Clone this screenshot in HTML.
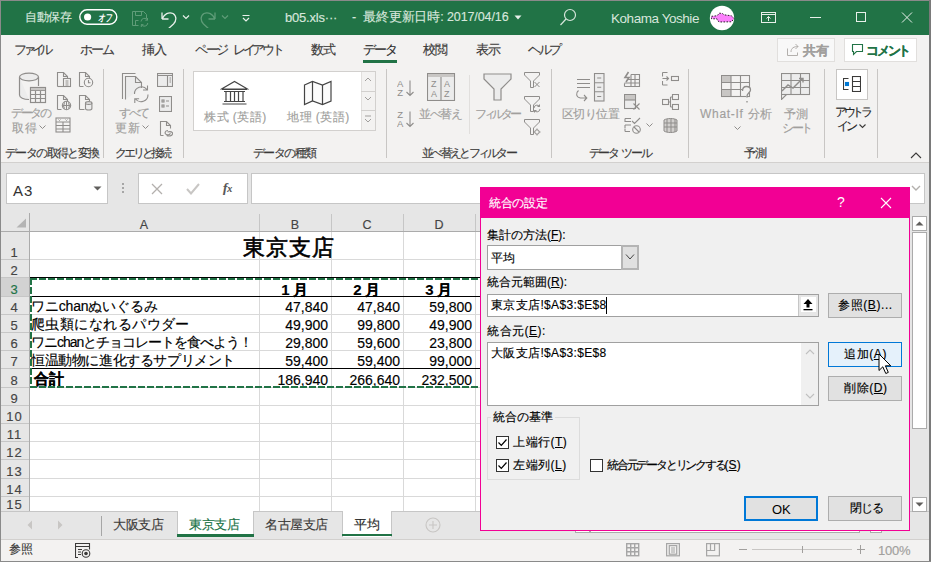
<!DOCTYPE html>
<html><head><meta charset="utf-8">
<style>
*{box-sizing:border-box;margin:0;padding:0}
html,body{width:931px;height:562px;overflow:hidden;background:#f3f2f1;font-family:"Liberation Sans",sans-serif;color:#262626;position:relative}
.a{position:absolute;white-space:nowrap}
.t{position:absolute;white-space:nowrap;line-height:1;-webkit-text-stroke:0.15px currentColor}
#title{left:0;top:0;width:931px;height:35px;background:#217346;border-top:1px solid #8a8a8a}
.tt{color:#d7e6dc;font-size:12px}
.tab{font-size:13px;color:#3b3a39;top:43px}
.dis{color:#a19f9d}
.glab{font-size:12px;color:#3b3a39;top:147px}
.sep{position:absolute;width:1px;background:#c8c6c4}
#fbar{left:1px;top:163px;width:928px;height:50px;background:#e6e6e6}
.box{position:absolute;background:#fff;border:1px solid #c6c6c6}
#grid{left:1px;top:213px;width:928px;height:298px;background:#fff;overflow:hidden}
.hl{position:absolute;left:0;height:1px;background:#dadada}
.vl{position:absolute;top:0;width:1px;background:#dadada}
.cell{position:absolute;font-size:13px;color:#000;line-height:1}
.num{text-align:right}
#dlg{left:480px;top:187px;width:430px;height:344px;background:#f0f0f0;border:1px solid #e3008c}
.dt{font-size:12px;color:#000}
.btn{position:absolute;background:#e1e1e1;border:1px solid #adadad;font-size:12px;color:#000;text-align:center}
</style></head><body>
<!-- window borders -->
<div class="a" style="left:0;top:0;width:1px;height:562px;background:#8a8a8a;z-index:50"></div>
<div class="a" style="left:929px;top:0;width:2px;height:562px;background:#7a7a7a;z-index:50"></div>
<div class="a" style="left:0;top:561px;width:931px;height:1px;background:#8a8a8a;z-index:50"></div>

<!-- TITLE BAR -->
<div class="a" id="title"></div>
<div class="t tt" style="left:25px;top:11px;letter-spacing:-0.35px">自動保存</div>
<svg class="a" style="left:79px;top:9px" width="39" height="17" viewBox="0 0 39 17">
 <rect x="0.8" y="0.8" width="37" height="14.4" rx="7.2" fill="none" stroke="#fff" stroke-width="1.4"/>
 <circle cx="8.6" cy="8" r="3.6" fill="#fff"/>
 <text x="19" y="12.3" font-size="10" font-weight="bold" font-style="italic" fill="#fff" font-family="Liberation Sans" textLength="14" lengthAdjust="spacingAndGlyphs">オフ</text>
</svg>
<svg class="a" style="left:131px;top:10px" width="19" height="18" viewBox="0 0 19 18" fill="none" stroke="#5f9c78" stroke-width="1">
 <path d="M1.5 1.5h11l3 3v4M1.5 1.5v14h6M4.5 1.5v4h6v-4M4.5 15.5v-5h3"/>
 <path d="M10 11.5a3.5 3.5 0 0 1 6.5-1.5M16.8 13a3.5 3.5 0 0 1-6.5 1.5M16.5 8v2.2h-2.2M10.3 17v-2.3h2.2"/>
</svg>
<svg class="a" style="left:160px;top:10px" width="18" height="18" viewBox="0 0 18 18" fill="none" stroke="#e8f0ea" stroke-width="1.3">
 <path d="M2 9V2.5M2 9h6.5M2 9C4 4 9 1.5 13 3.5C17 6 16.5 11 13.5 14L7.5 19.5"/>
</svg>
<svg class="a" style="left:182px;top:14px" width="8" height="6" viewBox="0 0 8 6" fill="none" stroke="#e8f0ea" stroke-width="1.2"><path d="M1 1.5l3 3 3-3"/></svg>
<svg class="a" style="left:199px;top:10px" width="18" height="18" viewBox="0 0 18 18" fill="none" stroke="#5f9c78" stroke-width="1.3">
 <path d="M16 9V2.5M16 9H9.5M16 9C14 4 9 1.5 5 3.5C1 6 1.5 11 4.5 14L10.5 19.5"/>
</svg>
<svg class="a" style="left:221px;top:14px" width="8" height="6" viewBox="0 0 8 6" fill="none" stroke="#5f9c78" stroke-width="1.2"><path d="M1 1.5l3 3 3-3"/></svg>
<svg class="a" style="left:241px;top:13px" width="10" height="9" viewBox="0 0 10 9" fill="none" stroke="#e8f0ea" stroke-width="1.2"><path d="M1.5 2.5h7M2 5l3 3 3-3"/></svg>
<div class="t tt" style="left:285px;top:11px;font-size:13px;letter-spacing:-0.2px">b05.xls···</div>
<div class="t tt" style="left:352px;top:11px;font-size:12.5px;letter-spacing:-0.1px">-&nbsp; 最終更新日時: 2017/04/16</div>
<svg class="a" style="left:514px;top:15px" width="8" height="5" viewBox="0 0 8 5"><path d="M0.5 0.5h7L4 4.5z" fill="#e8f0ea"/></svg>
<svg class="a" style="left:559px;top:8px" width="18" height="19" viewBox="0 0 18 19" fill="none" stroke="#d7e6dc" stroke-width="1.2">
 <circle cx="11" cy="7" r="5.5"/><path d="M7 11L1.5 17"/>
</svg>
<div class="t tt" style="left:611px;top:12px;font-size:13.5px;letter-spacing:-0.45px;-webkit-text-stroke:0">Kohama Yoshie</div>
<svg class="a" style="left:709px;top:5px" width="26" height="26" viewBox="0 0 26 26">
 <circle cx="13" cy="13" r="12.2" fill="#fff"/>
 <path d="M2.5 11.3L8 10.8L10.3 8.2L13.3 8.4L15 9.8L22.5 10.8L25 13.5L22.5 16.8L10.5 17L8.5 15.6L8 13.8L2.5 13.8z" fill="#fb80fb" stroke="#111" stroke-width="0.9" stroke-dasharray="1.6 1.4"/></svg>
<svg class="a" style="left:761px;top:12px" width="15" height="11" viewBox="0 0 15 11" fill="none" stroke="#e8f0ea" stroke-width="1">
 <rect x="0.5" y="0.5" width="14" height="10"/><path d="M0.5 2.5h14M7.5 9V4.5M5.5 6.5l2-2 2 2"/>
</svg>
<div class="a" style="left:810px;top:17px;width:11px;height:1px;background:#e8f0ea"></div>
<div class="a" style="left:856px;top:12px;width:10px;height:10px;border:1px solid #e8f0ea"></div>
<svg class="a" style="left:901px;top:12px" width="12" height="11" viewBox="0 0 12 11" fill="none" stroke="#e8f0ea" stroke-width="1"><path d="M1 0.5l10 10M11 0.5l-10 10"/></svg>

<!-- TABS -->
<div class="t tab" style="left:14px;letter-spacing:-4.2px">ファイル</div>
<div class="t tab" style="left:80px;letter-spacing:-1.8px">ホーム</div>
<div class="t tab" style="left:142px;letter-spacing:-1.2px">挿入</div>
<div class="t tab" style="left:195px;letter-spacing:-2.4px">ページ</div><div class="t tab" style="left:233px;letter-spacing:-3.3px">レイアウト</div>
<div class="t tab" style="left:311px;letter-spacing:-0.8px">数式</div>
<div class="t tab" style="left:363px;letter-spacing:-2.2px;color:#262626">データ</div>
<div class="a" style="left:363px;top:60px;width:34px;height:3px;background:#217346"></div>
<div class="t tab" style="left:423px;letter-spacing:-0.8px">校閲</div>
<div class="t tab" style="left:476px;letter-spacing:-0.8px">表示</div>
<div class="t tab" style="left:528px;letter-spacing:-2.4px">ヘルプ</div>
<div class="a" style="left:777px;top:38px;width:58px;height:24px;border:1px solid #e1dfdd;background:#f8f8f8"></div>
<svg class="a" style="left:786px;top:43px" width="14" height="14" viewBox="0 0 14 14" fill="none" stroke="#b3b0ad" stroke-width="1"><path d="M1.5 5.5v7h10v-3M5 9c0-4 3-5.5 7-5.5M9.5 1l2.5 2.5L9.5 6"/></svg>
<div class="t" style="left:803px;top:44px;font-size:13px;color:#a19f9d;font-weight:bold;letter-spacing:-0.5px">共有</div>
<div class="a" style="left:844px;top:38px;width:73px;height:24px;border:1px solid #e1dfdd;background:#fff"></div>
<svg class="a" style="left:851px;top:43px" width="13" height="13" viewBox="0 0 13 13" fill="none" stroke="#217346" stroke-width="1.1"><path d="M1.5 1.5h10v7h-6l-3 3v-3h-1z"/></svg>
<div class="t" style="left:866px;top:44px;font-size:13px;color:#217346;font-weight:bold;letter-spacing:-2.2px">コメント</div>

<!-- RIBBON -->
<!-- group 1 -->
<svg class="a" style="left:18px;top:72px" width="29" height="32" viewBox="0 0 29 32" fill="none" stroke="#8f8d8b" stroke-width="1.2">
 <path d="M1.5 5v18c0 2.5 4 4.5 9.5 4.5" fill="#ececec"/><ellipse cx="11" cy="5" rx="9.5" ry="3.8" fill="#ececec"/><path d="M20.5 5v9"/>
 <rect x="12.5" y="15.5" width="15" height="15" fill="#f3f2f1"/><path d="M12.5 18.5h15M12.5 22.5h15M12.5 26.5h15M17.5 18.5v12M22.5 18.5v12"/>
 <rect x="13" y="16" width="14" height="2.2" fill="#c8c6c4" stroke="none"/>
</svg>
<div class="t dis" style="left:11px;top:107px;font-size:12px;letter-spacing:-2.5px">データの</div>
<div class="t dis" style="left:12px;top:122px;font-size:12px;letter-spacing:0.6px">取得</div>
<svg class="a" style="left:39px;top:125px" width="7" height="5" viewBox="0 0 7 5" fill="none" stroke="#8f8d8b" stroke-width="1"><path d="M0.5 0.5l3 3 3-3"/></svg>
<svg class="a" style="left:56px;top:71px" width="16" height="17" viewBox="0 0 16 17" fill="none" stroke="#8f8d8b" stroke-width="1.1">
 <path d="M1.5 15.5V1.5h6l4 4v2"/><path d="M7.5 1.5v4h4"/><rect x="7.5" y="7.5" width="7" height="8" fill="#f3f2f1"/><path d="M9.5 10h3M9.5 12h3M9.5 14h3"/><path d="M1.5 15.5h6"/>
</svg>
<svg class="a" style="left:78px;top:71px" width="16" height="17" viewBox="0 0 16 17" fill="none" stroke="#8f8d8b" stroke-width="1.1">
 <path d="M1.5 15.5V1.5h6l4 4v2M7.5 1.5v4h4M1.5 15.5h4"/><circle cx="10.5" cy="11.5" r="4.2" fill="#f3f2f1"/><path d="M10.5 9v2.8h2"/>
</svg>
<svg class="a" style="left:56px;top:94px" width="16" height="17" viewBox="0 0 16 17" fill="none" stroke="#8f8d8b" stroke-width="1.1">
 <path d="M1.5 15.5V1.5h6l4 4v2M7.5 1.5v4h4M1.5 15.5h4"/><circle cx="10.5" cy="11.5" r="4.2" fill="#f3f2f1"/><path d="M6.3 11.5h8.4M10.5 7.3v8.4M8.5 8.2c-1 2-1 4.6 0 6.6M12.5 8.2c1 2 1 4.6 0 6.6"/>
</svg>
<svg class="a" style="left:78px;top:94px" width="16" height="17" viewBox="0 0 16 17" fill="none" stroke="#8f8d8b" stroke-width="1.1">
 <path d="M1.5 15.5V1.5h6l4 4v2M7.5 1.5v4h4M1.5 15.5h5"/><path d="M7.5 9v5.5c0 0.8 1.5 1.5 3.2 1.5s3.2-0.7 3.2-1.5V9" fill="#ececec"/><ellipse cx="10.7" cy="9" rx="3.2" ry="1.4" fill="#ececec"/>
</svg>
<svg class="a" style="left:55px;top:117px" width="16" height="16" viewBox="0 0 16 16" fill="none" stroke="#8f8d8b" stroke-width="1.1">
 <rect x="1" y="1" width="14" height="14"/><path d="M1 5h14M1 8.5h14M1 12h14M8 5v10"/><path d="M3.5 2.5l1 1 1-1M10.5 2.5l1 1 1-1" stroke-width="0.9"/>
</svg>
<div class="t" style="left:5px;top:147px;font-size:12px;color:#3b3a39;letter-spacing:-1.6px">データの取得と変換</div>
<div class="sep" style="left:103px;top:69px;height:89px"></div>
<!-- group 2 -->
<svg class="a" style="left:121px;top:72px" width="29" height="32" viewBox="0 0 29 32" fill="none" stroke="#8f8d8b" stroke-width="1.1">
 <path d="M1.5 27V1.5h13"/><path d="M4.5 27.5V4.5h10l6 6V16" fill="#ececec"/><path d="M14.5 4.5v6h6"/>
 <path d="M13.5 22a7 7 0 0 1 12.5-4.5M27 22.5a7 7 0 0 1-12.5 4.5M26.5 13.5v4.5h-4.5M13.8 31v-4.3h4.3"/>
</svg>
<div class="t dis" style="left:119px;top:107px;font-size:12px;letter-spacing:-2.3px">すべて</div>
<div class="t dis" style="left:115px;top:122px;font-size:12px;letter-spacing:0.6px">更新</div>
<svg class="a" style="left:142px;top:125px" width="7" height="5" viewBox="0 0 7 5" fill="none" stroke="#8f8d8b" stroke-width="1"><path d="M0.5 0.5l3 3 3-3"/></svg>
<svg class="a" style="left:157px;top:73px" width="16" height="14" viewBox="0 0 16 14" fill="none" stroke="#8f8d8b" stroke-width="1.1">
 <rect x="0.5" y="0.5" width="15" height="13" fill="#ececec"/><path d="M0.5 2.5h15M10.5 2.5v11M12.5 5h1.5M12.5 7h1.5M12.5 9h1.5"/>
</svg>
<svg class="a" style="left:159px;top:96px" width="13" height="16" viewBox="0 0 13 16" fill="none" stroke="#8f8d8b" stroke-width="1.1">
 <rect x="0.5" y="0.5" width="12" height="15" fill="#ececec"/><rect x="3" y="4" width="2" height="2"/><rect x="3" y="9" width="2" height="2"/><path d="M7 5h3M7 10h3"/>
</svg>
<svg class="a" style="left:159px;top:120px" width="15" height="17" viewBox="0 0 15 17" fill="none" stroke="#8f8d8b" stroke-width="1.1">
 <path d="M1.5 15.5V1.5h6l4 4v3M7.5 1.5v4h4M1.5 15.5h3"/><path d="M9 10.5c-3 0-4 3.2-1.5 4s4 0 3.5-1.5M8.5 12c3-1 5.5 0 5 2s-3.5 2.5-6 1.5"/>
</svg>
<div class="t" style="left:115px;top:147px;font-size:12px;color:#3b3a39;letter-spacing:-3.1px">クエリと接続</div>
<div class="sep" style="left:183px;top:69px;height:89px"></div>
<!-- group 3 gallery -->
<div class="a" style="left:193px;top:71px;width:183px;height:60px;background:#fff;border:1px solid #d2d0ce"></div>
<div class="a" style="left:361px;top:72px;width:14px;height:58px;background:#f3f2f1;border-left:1px solid #e1dfdd"></div>
<div class="a" style="left:361px;top:91px;width:14px;height:1px;background:#d2d0ce"></div>
<div class="a" style="left:361px;top:110px;width:14px;height:1px;background:#d2d0ce"></div>
<svg class="a" style="left:364px;top:77px" width="8" height="50" viewBox="0 0 8 50" fill="none" stroke="#a19f9d" stroke-width="1">
 <path d="M1 4l3-3 3 3M1 20l3 3 3-3M1 39h6M1 42l3 3 3-3"/>
</svg>
<svg class="a" style="left:220px;top:80px" width="29" height="26" viewBox="0 0 29 26" fill="none" stroke="#444" stroke-width="1.2">
 <path d="M1.5 9L14.5 1.5L27.5 9z" fill="#fff"/><path d="M2 9.5h25M4 11.5h21M4 21.5h21M2.5 24h24"/><path d="M6 11.5v10M10.5 11.5v10M14.5 11.5v10M18.5 11.5v10M23 11.5v10"/>
</svg>
<svg class="a" style="left:303px;top:80px" width="30" height="26" viewBox="0 0 30 26" fill="none" stroke="#444" stroke-width="1.2">
 <path d="M1.5 5L9.5 1.5L19.5 5L28 1.5V21L19.5 24.5L9.5 21L1.5 24.5z" fill="#fbfbfb"/><path d="M9.5 1.5V21M19.5 5V24.5"/>
</svg>
<div class="t dis" style="left:204px;top:111px;font-size:12px;letter-spacing:0.5px">株式 (英語)</div>
<div class="t dis" style="left:287px;top:111px;font-size:12px;letter-spacing:0.5px">地理 (英語)</div>
<div class="t" style="left:253px;top:147px;font-size:12px;color:#3b3a39;letter-spacing:-1.6px">データの種類</div>
<div class="sep" style="left:386px;top:69px;height:89px"></div>
<!-- group 4 sort filter -->
<svg class="a" style="left:397px;top:79px" width="18" height="18" viewBox="0 0 18 18" fill="none" stroke="#8f8d8b" stroke-width="1.1">
 <text x="0" y="8" font-size="9.5" fill="#8f8d8b" stroke="none" font-family="Liberation Sans">A</text><text x="0.3" y="17" font-size="9.5" fill="#8f8d8b" stroke="none" font-family="Liberation Sans">Z</text>
 <path d="M13 1.5v15M9.5 13l3.5 3.5 3.5-3.5"/>
</svg>
<svg class="a" style="left:397px;top:110px" width="18" height="18" viewBox="0 0 18 18" fill="none" stroke="#8f8d8b" stroke-width="1.1">
 <text x="0.3" y="8" font-size="9.5" fill="#8f8d8b" stroke="none" font-family="Liberation Sans">Z</text><text x="0" y="17" font-size="9.5" fill="#8f8d8b" stroke="none" font-family="Liberation Sans">A</text>
 <path d="M13 1.5v15M9.5 13l3.5 3.5 3.5-3.5"/>
</svg>
<svg class="a" style="left:427px;top:73px" width="29" height="28" viewBox="0 0 29 28" fill="none" stroke="#8f8d8b" stroke-width="1.1">
 <rect x="0.5" y="0.5" width="27" height="27" fill="#ececec"/><rect x="1" y="1" width="26" height="3" fill="#c8c6c4" stroke="none"/><path d="M14 4v23.5"/>
 <text x="4" y="14" font-size="9" fill="#8f8d8b" stroke="none" font-family="Liberation Sans">Z</text><text x="4" y="24" font-size="9" fill="#8f8d8b" stroke="none" font-family="Liberation Sans">A</text>
 <text x="17" y="14" font-size="9" fill="#8f8d8b" stroke="none" font-family="Liberation Sans">A</text><text x="17" y="24" font-size="9" fill="#8f8d8b" stroke="none" font-family="Liberation Sans">Z</text>
</svg>
<div class="t dis" style="left:419px;top:108px;font-size:12px;letter-spacing:-1.3px">並べ替え</div>
<div class="sep" style="left:469px;top:75px;height:59px;background:#e1dfdd"></div>
<svg class="a" style="left:483px;top:73px" width="29" height="28" viewBox="0 0 29 28" fill="none" stroke="#8f8d8b" stroke-width="1.2">
 <path d="M1 1h27v5L18 16v11h-7V16L1 6z" fill="#ececec"/>
</svg>
<div class="t dis" style="left:475px;top:108px;font-size:12px;letter-spacing:-3.3px">フィルター</div>
<svg class="a" style="left:524px;top:72px" width="18" height="17" viewBox="0 0 18 17" fill="none" stroke="#8f8d8b" stroke-width="1">
 <path d="M0.5 0.5h15v2.5L9.5 9v6.5h-3V9L0.5 3z"/><path d="M10.5 10l5 5M15.5 10l-5 5"/>
</svg>
<svg class="a" style="left:524px;top:96px" width="18" height="17" viewBox="0 0 18 17" fill="none" stroke="#8f8d8b" stroke-width="1">
 <path d="M0.5 0.5h15v2.5L9.5 9v6.5h-3V9L0.5 3z"/><path d="M10 12a3 3 0 0 1 5.5-1.5M16 13a3 3 0 0 1-5.5 1.5M15.5 8.5v2h-2M10.5 16.5v-2h2"/>
</svg>
<svg class="a" style="left:524px;top:119px" width="18" height="17" viewBox="0 0 18 17" fill="none" stroke="#8f8d8b" stroke-width="1">
 <path d="M0.5 0.5h15v2.5L9.5 9v6.5h-3V9L0.5 3z"/><circle cx="13" cy="13" r="2.2"/><path d="M13 9.5v1.3M13 15.2v1.3M9.5 13h1.3M15.2 13h1.3"/>
</svg>
<div class="t" style="left:422px;top:147px;font-size:12px;color:#3b3a39;letter-spacing:-2.7px">並べ替えとフィルター</div>
<div class="sep" style="left:551px;top:69px;height:89px"></div>
<!-- group 5 data tools -->
<svg class="a" style="left:573px;top:73px" width="32" height="29" viewBox="0 0 32 29" fill="none" stroke="#8f8d8b" stroke-width="1.1">
 <path d="M4 6.5h13M4 10.5h13M4 14.5h13"/><path d="M5.5 17.5c-3 2.5-2.5 7 2 7.5h6M11 22l2.8 3-2.8 3"/>
 <rect x="21.5" y="0.5" width="9.5" height="27.5" fill="#ececec" /><path d="M21.5 9.7h9.5M21.5 18.8h9.5M24.2 5h4M24.2 14.2h4M24.2 23.5h4"/>
</svg>
<div class="t dis" style="left:562px;top:108px;font-size:12px;letter-spacing:-0.6px">区切り位置</div>
<svg class="a" style="left:623px;top:71px" width="18" height="16" viewBox="0 0 18 16" fill="none" stroke="#8f8d8b" stroke-width="1.1">
 <path d="M5.5 1L2 6.5h4L3 11" stroke-width="1.6"/><path d="M1.5 15.5h15V3.5H8M1.5 12.5v3M8 3.5v12M12 3.5v12M4 8.5h12.5M1.5 12h15"/>
</svg>
<svg class="a" style="left:624px;top:94px" width="17" height="16" viewBox="0 0 17 16" fill="none" stroke="#8f8d8b" stroke-width="1.1">
 <rect x="0.5" y="0.5" width="11" height="14" fill="#ececec"/><rect x="1" y="1" width="10" height="5" fill="#c8c6c4" stroke="none"/><path d="M0.5 6h11"/><path d="M9.5 9.5l6 6M15.5 9.5l-6 6"/>
</svg>
<svg class="a" style="left:624px;top:117px" width="18" height="17" viewBox="0 0 18 17" fill="none" stroke="#8f8d8b" stroke-width="1.1">
 <path d="M1 1.5h6M1 1.5v3h6M1 8h6M1 8v3M1 14.5h5M1 11.5v3M8 4l2.5 2.5L16 1"/><circle cx="12.5" cy="12.5" r="3.8"/><path d="M10 10l5 5"/>
</svg>
<svg class="a" style="left:646px;top:123px" width="7" height="5" viewBox="0 0 7 5" fill="none" stroke="#8f8d8b" stroke-width="1"><path d="M0.5 0.5l3 3 3-3"/></svg>
<svg class="a" style="left:662px;top:72px" width="17" height="14" viewBox="0 0 17 14" fill="none" stroke="#8f8d8b" stroke-width="1.1">
 <path d="M0.5 0.5h5M0.5 0.5v4M0.5 13h5M0.5 9v4M0.5 6.5h6M4.5 4.5l2 2-2 2"/><rect x="9.5" y="4.5" width="7" height="4"/>
</svg>
<svg class="a" style="left:662px;top:94px" width="17" height="16" viewBox="0 0 17 16" fill="none" stroke="#8f8d8b" stroke-width="1.1">
 <rect x="0.5" y="5.5" width="6" height="5"/><rect x="10.5" y="0.5" width="6" height="5"/><rect x="10.5" y="10.5" width="6" height="5"/><path d="M6.5 8h2M8.5 3v10M8.5 3h2M8.5 13h2"/>
</svg>
<svg class="a" style="left:662px;top:117px" width="17" height="16" viewBox="0 0 17 16" fill="#d2d0ce" stroke="#8f8d8b" stroke-width="1">
 <path d="M2 3c3-2 10-2 13 0v11c-3 2-10 2-13 0z"/><path d="M5 2v13M9 1.5v14M13 2v13M2 6h13M2 10h13" fill="none"/>
</svg>
<div class="t" style="left:589px;top:147px;font-size:12px;color:#3b3a39;letter-spacing:-2.6px">データ</div><div class="t" style="left:621px;top:147px;font-size:12px;color:#3b3a39;letter-spacing:-2.2px">ツール</div>
<div class="sep" style="left:688px;top:69px;height:89px"></div>
<!-- group 6 forecast -->
<svg class="a" style="left:721px;top:75px" width="32" height="29" viewBox="0 0 32 29" fill="none" stroke="#8f8d8b" stroke-width="1.1">
 <rect x="0.5" y="0.5" width="28" height="21" fill="#f3f2f1"/><rect x="1" y="1" width="9" height="6.5" fill="#c8c6c4" stroke="none"/><rect x="1" y="14.5" width="9" height="6.5" fill="#c8c6c4" stroke="none"/>
 <path d="M0.5 7.5h28M0.5 14.5h28M10 0.5v21M19.5 0.5v21"/>
 <path d="M21.5 16c0-3 1.5-4.5 4-4.5s4 1.5 4 3.5c0 2.5-3.5 3-3.5 6v1.5M26 26v1.5" stroke-width="1.3" fill="#f3f2f1"/>
</svg>
<div class="t dis" style="left:700px;top:108px;font-size:12px;letter-spacing:0.7px">What-If 分析</div>
<svg class="a" style="left:734px;top:126px" width="7" height="5" viewBox="0 0 7 5" fill="none" stroke="#8f8d8b" stroke-width="1"><path d="M0.5 0.5l3 3 3-3"/></svg>
<svg class="a" style="left:781px;top:73px" width="30" height="27" viewBox="0 0 30 27" fill="none" stroke="#8f8d8b" stroke-width="1.1">
 <rect x="0.5" y="0.5" width="28" height="21" fill="#ececec"/><path d="M0.5 7.5h28M0.5 14.5h28M10 0.5v21M19.5 0.5v21"/><path d="M0.5 21.5v5l5-5"/>
 <path d="M1 18l6-6 5 3 9-9M18 5.5h4v4" stroke-width="1.4"/>
</svg>
<div class="t dis" style="left:784px;top:108px;font-size:12px;letter-spacing:-0.4px">予測</div>
<div class="t dis" style="left:782px;top:122px;font-size:12px;letter-spacing:-2.5px">シート</div>
<div class="t" style="left:744px;top:147px;font-size:12px;color:#3b3a39;letter-spacing:-0.6px">予測</div>
<div class="sep" style="left:824px;top:69px;height:89px"></div>
<!-- group 7 outline -->
<div class="a" style="left:836px;top:69px;width:32px;height:31px;background:#fff;border:1px solid #c8c6c4"></div>
<svg class="a" style="left:843px;top:76px" width="18" height="16" viewBox="0 0 18 16" fill="none" stroke="#3b3a39" stroke-width="1.1">
 <path d="M5.5 2.5h-5v11h5"/><rect x="9.5" y="0.5" width="8" height="15"/><path d="M9.5 5.5h8M9.5 10.5h8"/><rect x="2.5" y="6.5" width="3" height="3" fill="#0078d4" stroke="#0078d4"/>
</svg>
<div class="t" style="left:835px;top:106px;font-size:12px;color:#262626;letter-spacing:-3.4px">アウトラ</div>
<div class="t" style="left:837px;top:120px;font-size:12px;color:#262626;letter-spacing:-2.6px">イン</div>
<svg class="a" style="left:859px;top:124px" width="7" height="5" viewBox="0 0 7 5" fill="none" stroke="#3b3a39" stroke-width="1.1"><path d="M0.5 0.5l3 3 3-3"/></svg>
<div class="sep" style="left:877px;top:69px;height:89px"></div>
<svg class="a" style="left:910px;top:152px" width="12" height="7" viewBox="0 0 12 7" fill="none" stroke="#3b3a39" stroke-width="1.1"><path d="M1 6l5-5 5 5"/></svg>
<div class="a" style="left:1px;top:162px;width:928px;height:1px;background:#d2d0ce"></div>

<!-- FORMULA BAR -->
<div class="a" id="fbar"></div>
<div class="box" style="left:6px;top:173px;width:102px;height:31px;border-color:#c6c6c6"></div>
<div class="t" style="left:13px;top:183px;font-size:15px;color:#333;letter-spacing:1px;-webkit-text-stroke:0">A3</div>
<svg class="a" style="left:93px;top:186px" width="9" height="5" viewBox="0 0 9 5"><path d="M0.5 0.5h8L4.5 4.5z" fill="#605e5c"/></svg>
<div class="a" style="left:122px;top:183px;width:2px;height:2px;background:#a6a6a6"></div>
<div class="a" style="left:122px;top:187px;width:2px;height:2px;background:#a6a6a6"></div>
<div class="a" style="left:122px;top:191px;width:2px;height:2px;background:#a6a6a6"></div>
<div class="box" style="left:138px;top:173px;width:110px;height:31px;border-color:#c6c6c6"></div>
<svg class="a" style="left:151px;top:183px" width="12" height="12" viewBox="0 0 12 12" fill="none" stroke="#b3b0ad" stroke-width="1.3"><path d="M1 1l10 10M11 1L1 11"/></svg>
<svg class="a" style="left:186px;top:183px" width="14" height="12" viewBox="0 0 14 12" fill="none" stroke="#c8c6c4" stroke-width="2"><path d="M1 6l4 4.5L13 1"/></svg>
<div class="t" style="left:223px;top:181px;font-size:13px;color:#555;font-family:'Liberation Serif',serif;font-style:italic;font-weight:bold">f<span style="font-size:10px">x</span></div>
<div class="box" style="left:251px;top:173px;width:674px;height:31px;border-color:#c6c6c6"></div>
<svg class="a" style="left:911px;top:185px" width="10" height="6" viewBox="0 0 10 6" fill="none" stroke="#b3b0ad" stroke-width="1.4"><path d="M1 1l4 4 4-4"/></svg>

<!-- GRID -->
<div class="a" style="left:1px;top:213px;width:928px;height:298px;background:#fff"></div>
<div class="a" style="left:1px;top:213px;width:928px;height:18px;background:#e6e6e6"></div>
<div class="a" style="left:1px;top:213px;width:28px;height:298px;background:#e6e6e6"></div>
<div class="a" style="left:1px;top:278px;width:28px;height:18px;background:#d2d2d2"></div>
<div class="a" style="left:30px;top:259px;width:899px;height:1px;background:#d9d9d9"></div>
<div class="a" style="left:1px;top:259px;width:28px;height:1px;background:#c6c6c6"></div>
<div class="a" style="left:30px;top:277px;width:899px;height:1px;background:#d9d9d9"></div>
<div class="a" style="left:1px;top:277px;width:28px;height:1px;background:#c6c6c6"></div>
<div class="a" style="left:30px;top:296px;width:899px;height:1px;background:#d9d9d9"></div>
<div class="a" style="left:1px;top:296px;width:28px;height:1px;background:#c6c6c6"></div>
<div class="a" style="left:30px;top:314px;width:899px;height:1px;background:#d9d9d9"></div>
<div class="a" style="left:1px;top:314px;width:28px;height:1px;background:#c6c6c6"></div>
<div class="a" style="left:30px;top:332px;width:899px;height:1px;background:#d9d9d9"></div>
<div class="a" style="left:1px;top:332px;width:28px;height:1px;background:#c6c6c6"></div>
<div class="a" style="left:30px;top:350px;width:899px;height:1px;background:#d9d9d9"></div>
<div class="a" style="left:1px;top:350px;width:28px;height:1px;background:#c6c6c6"></div>
<div class="a" style="left:30px;top:368px;width:899px;height:1px;background:#d9d9d9"></div>
<div class="a" style="left:1px;top:368px;width:28px;height:1px;background:#c6c6c6"></div>
<div class="a" style="left:30px;top:387px;width:899px;height:1px;background:#d9d9d9"></div>
<div class="a" style="left:1px;top:387px;width:28px;height:1px;background:#c6c6c6"></div>
<div class="a" style="left:30px;top:405px;width:899px;height:1px;background:#d9d9d9"></div>
<div class="a" style="left:1px;top:405px;width:28px;height:1px;background:#c6c6c6"></div>
<div class="a" style="left:30px;top:423px;width:899px;height:1px;background:#d9d9d9"></div>
<div class="a" style="left:1px;top:423px;width:28px;height:1px;background:#c6c6c6"></div>
<div class="a" style="left:30px;top:441px;width:899px;height:1px;background:#d9d9d9"></div>
<div class="a" style="left:1px;top:441px;width:28px;height:1px;background:#c6c6c6"></div>
<div class="a" style="left:30px;top:459px;width:899px;height:1px;background:#d9d9d9"></div>
<div class="a" style="left:1px;top:459px;width:28px;height:1px;background:#c6c6c6"></div>
<div class="a" style="left:30px;top:478px;width:899px;height:1px;background:#d9d9d9"></div>
<div class="a" style="left:1px;top:478px;width:28px;height:1px;background:#c6c6c6"></div>
<div class="a" style="left:30px;top:496px;width:899px;height:1px;background:#d9d9d9"></div>
<div class="a" style="left:1px;top:496px;width:28px;height:1px;background:#c6c6c6"></div>
<div class="a" style="left:259px;top:232px;width:1px;height:279px;background:#d9d9d9"></div>
<div class="a" style="left:259px;top:214px;width:1px;height:17px;background:#c6c6c6"></div>
<div class="a" style="left:331px;top:232px;width:1px;height:279px;background:#d9d9d9"></div>
<div class="a" style="left:331px;top:214px;width:1px;height:17px;background:#c6c6c6"></div>
<div class="a" style="left:403px;top:232px;width:1px;height:279px;background:#d9d9d9"></div>
<div class="a" style="left:403px;top:214px;width:1px;height:17px;background:#c6c6c6"></div>
<div class="a" style="left:475px;top:232px;width:1px;height:279px;background:#d9d9d9"></div>
<div class="a" style="left:475px;top:214px;width:1px;height:17px;background:#c6c6c6"></div>
<div class="a" style="left:547px;top:232px;width:1px;height:279px;background:#d9d9d9"></div>
<div class="a" style="left:547px;top:214px;width:1px;height:17px;background:#c6c6c6"></div>
<div class="a" style="left:619px;top:232px;width:1px;height:279px;background:#d9d9d9"></div>
<div class="a" style="left:619px;top:214px;width:1px;height:17px;background:#c6c6c6"></div>
<div class="a" style="left:691px;top:232px;width:1px;height:279px;background:#d9d9d9"></div>
<div class="a" style="left:691px;top:214px;width:1px;height:17px;background:#c6c6c6"></div>
<div class="a" style="left:763px;top:232px;width:1px;height:279px;background:#d9d9d9"></div>
<div class="a" style="left:763px;top:214px;width:1px;height:17px;background:#c6c6c6"></div>
<div class="a" style="left:835px;top:232px;width:1px;height:279px;background:#d9d9d9"></div>
<div class="a" style="left:835px;top:214px;width:1px;height:17px;background:#c6c6c6"></div>
<div class="a" style="left:907px;top:232px;width:1px;height:279px;background:#d9d9d9"></div>
<div class="a" style="left:907px;top:214px;width:1px;height:17px;background:#c6c6c6"></div>
<div class="a" style="left:1px;top:231px;width:928px;height:1px;background:#ababab"></div>
<div class="a" style="left:29px;top:213px;width:1px;height:298px;background:#ababab"></div>
<svg class="a" style="left:16px;top:218px" width="11" height="10" viewBox="0 0 11 10"><path d="M10 0.5V9.5H0.5z" fill="#b4b4b4"/></svg>
<div class="t" style="left:124.0px;width:40px;text-align:center;top:219px;font-size:12.5px;color:#444">A</div>
<div class="t" style="left:275.0px;width:40px;text-align:center;top:219px;font-size:12.5px;color:#444">B</div>
<div class="t" style="left:347.0px;width:40px;text-align:center;top:219px;font-size:12.5px;color:#444">C</div>
<div class="t" style="left:419.0px;width:40px;text-align:center;top:219px;font-size:12.5px;color:#444">D</div>
<div class="t" style="left:491.0px;width:40px;text-align:center;top:219px;font-size:12.5px;color:#444">E</div>
<div class="t" style="left:563.0px;width:40px;text-align:center;top:219px;font-size:12.5px;color:#444">F</div>
<div class="t" style="left:635.0px;width:40px;text-align:center;top:219px;font-size:12.5px;color:#444">G</div>
<div class="t" style="left:707.0px;width:40px;text-align:center;top:219px;font-size:12.5px;color:#444">H</div>
<div class="t" style="left:779.0px;width:40px;text-align:center;top:219px;font-size:12.5px;color:#444">I</div>
<div class="t" style="left:851.0px;width:40px;text-align:center;top:219px;font-size:12.5px;color:#444">J</div>
<div class="t" style="left:0px;width:28px;text-align:center;top:246px;font-size:13px;color:#444;letter-spacing:1px;text-indent:1px">1</div>
<div class="t" style="left:0px;width:28px;text-align:center;top:264px;font-size:13px;color:#444;letter-spacing:1px;text-indent:1px">2</div>
<div class="t" style="left:0px;width:28px;text-align:center;top:283px;font-size:13px;color:#217346;letter-spacing:1px;text-indent:1px">3</div>
<div class="t" style="left:0px;width:28px;text-align:center;top:301px;font-size:13px;color:#444;letter-spacing:1px;text-indent:1px">4</div>
<div class="t" style="left:0px;width:28px;text-align:center;top:319px;font-size:13px;color:#444;letter-spacing:1px;text-indent:1px">5</div>
<div class="t" style="left:0px;width:28px;text-align:center;top:337px;font-size:13px;color:#444;letter-spacing:1px;text-indent:1px">6</div>
<div class="t" style="left:0px;width:28px;text-align:center;top:355px;font-size:13px;color:#444;letter-spacing:1px;text-indent:1px">7</div>
<div class="t" style="left:0px;width:28px;text-align:center;top:374px;font-size:13px;color:#444;letter-spacing:1px;text-indent:1px">8</div>
<div class="t" style="left:0px;width:28px;text-align:center;top:392px;font-size:13px;color:#444;letter-spacing:1px;text-indent:1px">9</div>
<div class="t" style="left:0px;width:28px;text-align:center;top:410px;font-size:13px;color:#444;letter-spacing:1px;text-indent:1px">10</div>
<div class="t" style="left:0px;width:28px;text-align:center;top:428px;font-size:13px;color:#444;letter-spacing:1px;text-indent:1px">11</div>
<div class="t" style="left:0px;width:28px;text-align:center;top:446px;font-size:13px;color:#444;letter-spacing:1px;text-indent:1px">12</div>
<div class="t" style="left:0px;width:28px;text-align:center;top:465px;font-size:13px;color:#444;letter-spacing:1px;text-indent:1px">13</div>
<div class="t" style="left:0px;width:28px;text-align:center;top:483px;font-size:13px;color:#444;letter-spacing:1px;text-indent:1px">14</div>
<div class="t" style="left:0px;width:28px;text-align:center;top:498px;font-size:13px;color:#444;letter-spacing:1px;text-indent:1px">15</div>
<div class="t" style="left:30px;width:517px;text-align:center;top:237px;font-size:22px;color:#000;letter-spacing:1px;text-indent:1px;-webkit-text-stroke:0.6px #000">東京支店</div>
<div class="t" style="left:259px;width:72px;text-align:center;top:282px;font-size:15px;color:#000;font-weight:bold;letter-spacing:3px;text-indent:2px">1月</div>
<div class="t" style="left:331px;width:72px;text-align:center;top:282px;font-size:15px;color:#000;font-weight:bold;letter-spacing:3px;text-indent:2px">2月</div>
<div class="t" style="left:403px;width:72px;text-align:center;top:282px;font-size:15px;color:#000;font-weight:bold;letter-spacing:3px;text-indent:2px">3月</div>
<div class="t" style="left:31px;width:228px;text-align:left;top:299px;font-size:14px;color:#000;letter-spacing:-0.15px">ワニchanぬいぐるみ</div>
<div class="t" style="left:259px;width:69px;text-align:right;top:300px;font-size:14px;color:#000">47,840</div>
<div class="t" style="left:331px;width:69px;text-align:right;top:300px;font-size:14px;color:#000">47,840</div>
<div class="t" style="left:403px;width:69px;text-align:right;top:300px;font-size:14px;color:#000">59,800</div>
<div class="t" style="left:31px;width:228px;text-align:left;top:317px;font-size:14px;color:#000;letter-spacing:0.45px">爬虫類になれるパウダー</div>
<div class="t" style="left:259px;width:69px;text-align:right;top:318px;font-size:14px;color:#000">49,900</div>
<div class="t" style="left:331px;width:69px;text-align:right;top:318px;font-size:14px;color:#000">99,800</div>
<div class="t" style="left:403px;width:69px;text-align:right;top:318px;font-size:14px;color:#000">49,900</div>
<div class="t" style="left:31px;width:228px;text-align:left;top:335px;font-size:14px;color:#000;letter-spacing:-1px">ワニchanとチョコレートを食べよう！</div>
<div class="t" style="left:259px;width:69px;text-align:right;top:336px;font-size:14px;color:#000">29,800</div>
<div class="t" style="left:331px;width:69px;text-align:right;top:336px;font-size:14px;color:#000">59,600</div>
<div class="t" style="left:403px;width:69px;text-align:right;top:336px;font-size:14px;color:#000">23,800</div>
<div class="t" style="left:31px;width:228px;text-align:left;top:353px;font-size:14px;color:#000;letter-spacing:-0.4px">恒温動物に進化するサプリメント</div>
<div class="t" style="left:259px;width:69px;text-align:right;top:354px;font-size:14px;color:#000">59,400</div>
<div class="t" style="left:331px;width:69px;text-align:right;top:354px;font-size:14px;color:#000">59,400</div>
<div class="t" style="left:403px;width:69px;text-align:right;top:354px;font-size:14px;color:#000">99,000</div>
<div class="t" style="left:34px;width:228px;text-align:left;top:371px;font-size:15px;color:#000;font-weight:bold;letter-spacing:0px">合計</div>
<div class="t" style="left:259px;width:69px;text-align:right;top:373px;font-size:14px;color:#000">186,940</div>
<div class="t" style="left:331px;width:69px;text-align:right;top:373px;font-size:14px;color:#000">266,640</div>
<div class="t" style="left:403px;width:69px;text-align:right;top:373px;font-size:14px;color:#000">232,500</div>
<div class="a" style="left:30px;top:277px;width:899px;height:1px;background:#000"></div>
<div class="a" style="left:30px;top:296px;width:899px;height:1px;background:#000"></div>
<div class="a" style="left:30px;top:368px;width:899px;height:1px;background:#000"></div>
<svg class="a" style="left:30px;top:278px" width="899" height="110"><g stroke="#217346" stroke-width="2" stroke-dasharray="7 2" fill="none"><path d="M0 1H899"/><path d="M0 109H899"/><path d="M1 0V110"/></g></svg>

<!-- SHEET TABS -->
<div class="a" style="left:1px;top:511px;width:928px;height:28px;background:#e6e6e6;border-top:1px solid #c6c6c6"></div>
<svg class="a" style="left:27px;top:520px" width="40" height="10" viewBox="0 0 40 10"><path d="M5 0.5v9L0.5 5z" fill="#c8c6c4"/><path d="M31 0.5v9L35.5 5z" fill="#c8c6c4"/></svg>
<div class="a" style="left:101px;top:516px;width:1px;height:20px;background:#a6a6a6"></div>
<div class="t" style="left:113px;top:518px;font-size:13px;color:#3b3a39;letter-spacing:-0.4px">大阪支店</div>
<div class="a" style="left:177px;top:511px;width:77px;height:26px;background:#fff;border-left:1px solid #c6c6c6;border-right:1px solid #c6c6c6"></div>
<div class="a" style="left:177px;top:534px;width:77px;height:3px;background:#217346"></div>
<div class="t" style="left:189px;top:518px;font-size:13px;color:#217346;letter-spacing:-0.4px">東京支店</div>
<div class="t" style="left:265px;top:518px;font-size:13px;color:#3b3a39;letter-spacing:-0.5px">名古屋支店</div>
<div class="a" style="left:342px;top:511px;width:50px;height:26px;background:#fff;border-left:1px solid #c6c6c6;border-right:1px solid #c6c6c6"></div>
<div class="a" style="left:342px;top:534px;width:50px;height:2px;background:#217346"></div>
<div class="t" style="left:354px;top:518px;font-size:13px;color:#262626;letter-spacing:-0.3px">平均</div>
<svg class="a" style="left:425px;top:517px" width="16" height="16" viewBox="0 0 16 16" fill="none" stroke="#c8c6c4" stroke-width="1.1"><circle cx="8" cy="8" r="7"/><path d="M8 4v8M4 8h8"/></svg>
<!-- STATUS -->
<div class="a" style="left:1px;top:539px;width:928px;height:22px;background:#f3f2f1;border-top:1px solid #d2d0ce"></div>
<div class="t" style="left:9px;top:543px;font-size:12px;color:#3b3a39;letter-spacing:-0.5px">参照</div>
<svg class="a" style="left:75px;top:543px" width="16" height="15" viewBox="0 0 16 15" fill="none" stroke="#3b3a39" stroke-width="1.1"><path d="M3 14.5H0.5V0.5h14v6M0.5 3.5h14M3 6.5h4M3 9h3M3 11.5h3"/><circle cx="11" cy="10.5" r="3.8" fill="#f3f2f1"/><circle cx="11" cy="10.5" r="1.8" fill="#3b3a39" stroke="none"/></svg>
<svg class="a" style="left:626px;top:543px" width="14" height="14" viewBox="0 0 14 14" fill="none" stroke="#a6a6a6" stroke-width="1.4"><rect x="0.7" y="0.7" width="12" height="12"/><path d="M4.7 0.7v12M8.7 0.7v12M0.7 4.7h12M0.7 8.7h12"/></svg>
<svg class="a" style="left:666px;top:543px" width="14" height="14" viewBox="0 0 14 14" fill="none" stroke="#a6a6a6" stroke-width="1.2"><rect x="0.6" y="0.6" width="12.8" height="12.2"/><rect x="3.3" y="2.6" width="7.4" height="8.6"/><path d="M5 5h4M5 7h4M5 9h4"/></svg>
<svg class="a" style="left:706px;top:543px" width="14" height="14" viewBox="0 0 14 14" fill="none" stroke="#a6a6a6" stroke-width="1.2"><rect x="0.6" y="0.6" width="12.8" height="12.2"/><path d="M0.6 7.5h8v-7M4.5 0.6v7"/></svg>
<div class="a" style="left:739px;top:549px;width:8px;height:1px;background:#a19f9d"></div>
<div class="a" style="left:752px;top:549px;width:100px;height:1px;background:#c8c6c4"></div>
<div class="a" style="left:802px;top:546px;width:1px;height:7px;background:#a19f9d"></div>
<div class="a" style="left:857px;top:549px;width:8px;height:1px;background:#a19f9d"></div>
<div class="a" style="left:860px;top:545px;width:1px;height:9px;background:#a19f9d"></div>
<div class="t" style="left:878px;top:544px;font-size:13px;color:#a19f9d;letter-spacing:-0.2px">100%</div>
<!-- VSCROLL -->
<div class="a" style="left:910px;top:213px;width:19px;height:298px;background:#e6e6e6"></div>
<div class="a" style="left:912px;top:216px;width:15px;height:15px;background:#fff;border:1px solid #ababab"></div>
<svg class="a" style="left:915px;top:221px" width="9" height="5" viewBox="0 0 9 5"><path d="M0.5 4.5h8L4.5 0.5z" fill="#605e5c"/></svg>
<div class="a" style="left:912px;top:232px;width:15px;height:197px;background:#fff;border:1px solid #ababab"></div>
<div class="a" style="left:912px;top:497px;width:15px;height:15px;background:#fff;border:1px solid #ababab"></div>
<svg class="a" style="left:915px;top:502px" width="9" height="5" viewBox="0 0 9 5"><path d="M0.5 0.5h8L4.5 4.5z" fill="#605e5c"/></svg>
<!-- HSCROLL -->
<div class="a" style="left:575px;top:525px;width:15px;height:8px;background:#fff;border:1px solid #ababab"></div>
<div class="a" style="left:590px;top:525px;width:270px;height:8px;background:#fff;border:1px solid #ababab"></div>
<div class="a" style="left:870px;top:525px;width:12px;height:8px;background:#fff;border:1px solid #ababab"></div>
<!-- DIALOG -->
<div class="a" style="left:480px;top:187px;width:430px;height:344px;background:#f0f0f0;border:1px solid #f20094"></div>
<div class="a" style="left:480px;top:187px;width:430px;height:31px;background:#f20094"></div>
<div class="t" style="left:489px;top:197px;font-size:12px;color:#fff;letter-spacing:-0.3px">統合の設定</div>
<div class="t" style="left:837px;top:195px;font-size:14px;color:#fff;-webkit-text-stroke:0">?</div>
<svg class="a" style="left:880px;top:197px" width="12" height="12" viewBox="0 0 12 12" fill="none" stroke="#fff" stroke-width="1.1"><path d="M1 1l10 10M11 1L1 11"/></svg>
<div class="t dt" style="left:487px;top:229px">集計の方法(<u>F</u>):</div>
<div class="a" style="left:487px;top:245px;width:152px;height:25px;background:#fff;border:1px solid #a0a0a0"></div>
<div class="a" style="left:621px;top:245px;width:18px;height:25px;background:#e0e0e0;border:2px solid #b4b4b4"></div>
<svg class="a" style="left:625px;top:254px" width="10" height="6" viewBox="0 0 10 6" fill="none" stroke="#444" stroke-width="1"><path d="M1 0.5l4 4.5 4-4.5"/></svg>
<div class="t dt" style="left:491px;top:252px">平均</div>
<div class="t dt" style="left:487px;top:276px">統合元範囲(<u>R</u>):</div>
<div class="a" style="left:487px;top:294px;width:332px;height:23px;background:#fff;border:1px solid #a0a0a0"></div>
<div class="a" style="left:798px;top:295px;width:20px;height:21px;background:#e6e6e6;border-left:1px solid #c6c6c6"></div>
<div class="a" style="left:801px;top:297px;width:15px;height:15px;background:#fff"></div>
<svg class="a" style="left:802px;top:298px" width="12" height="13" viewBox="0 0 12 13"><path d="M6 1L1.5 6H4.5V9.5H7.5V6H10.5z" fill="#000"/><rect x="1.5" y="11" width="9" height="1.3" fill="#000"/></svg>
<div class="t dt" style="left:491px;top:299px;letter-spacing:0.35px">東京支店!$A$3:$E$8</div>
<div class="a" style="left:606px;top:297px;width:1px;height:17px;background:#000"></div>
<div class="btn" style="left:828px;top:293px;width:74px;height:25px"></div>
<div class="t dt" style="left:838px;top:299px;letter-spacing:0.6px">参照(<u>B</u>)...</div>
<div class="t dt" style="left:487px;top:325px;letter-spacing:0.5px">統合元(<u>E</u>):</div>
<div class="a" style="left:487px;top:342px;width:332px;height:64px;background:#fff;border:1px solid #a0a0a0"></div>
<div class="a" style="left:801px;top:343px;width:17px;height:62px;background:#f0f0f0"></div>
<svg class="a" style="left:805px;top:349px" width="10" height="50" viewBox="0 0 10 50" fill="none" stroke="#c0c0c0" stroke-width="1.1"><path d="M1 5l4-4 4 4M1 45l4 4 4-4"/></svg>
<div class="t dt" style="left:491px;top:347px;letter-spacing:0.35px">大阪支店!$A$3:$E$8</div>
<div class="btn" style="left:828px;top:342px;width:74px;height:25px;background:#e5f1fb;border-color:#0078d7"></div>
<div class="t dt" style="left:844px;top:348px;letter-spacing:0.6px">追加(<u>A</u>)</div>
<div class="btn" style="left:828px;top:376px;width:74px;height:25px"></div>
<div class="t dt" style="left:844px;top:382px;letter-spacing:0.6px">削除(<u>D</u>)</div>
<div class="a" style="left:487px;top:417px;width:93px;height:63px;border:1px solid #dcdcdc"></div>
<div class="t dt" style="left:491px;top:411px;background:#f0f0f0;padding:0 2px">統合の基準</div>
<div class="a" style="left:496px;top:436px;width:13px;height:13px;background:#fff;border:1px solid #333"></div>
<svg class="a" style="left:497px;top:437px" width="11" height="11" viewBox="0 0 11 11" fill="none" stroke="#000" stroke-width="1.2"><path d="M1.5 5.5l2.8 2.8L9.5 2.5"/></svg>
<div class="t dt" style="left:513px;top:436px;letter-spacing:0.5px">上端行(<u>T</u>)</div>
<div class="a" style="left:496px;top:459px;width:13px;height:13px;background:#fff;border:1px solid #333"></div>
<svg class="a" style="left:497px;top:460px" width="11" height="11" viewBox="0 0 11 11" fill="none" stroke="#000" stroke-width="1.2"><path d="M1.5 5.5l2.8 2.8L9.5 2.5"/></svg>
<div class="t dt" style="left:513px;top:459px;letter-spacing:0.5px">左端列(<u>L</u>)</div>
<div class="a" style="left:590px;top:459px;width:13px;height:13px;background:#fff;border:1px solid #333"></div>
<div class="t dt" style="left:607px;top:459px;letter-spacing:-2.2px">統合元データとリンクする<span style="letter-spacing:0">(<u>S</u>)</span></div>
<div class="btn" style="left:744px;top:496px;width:74px;height:25px;border:2px solid #0078d7"></div>
<div class="t dt" style="left:772px;top:503px;font-size:13px;-webkit-text-stroke:0">OK</div>
<div class="btn" style="left:828px;top:496px;width:74px;height:25px"></div>
<div class="t dt" style="left:850px;top:502px;letter-spacing:-1px">閉じる</div>
<svg class="a" style="left:878px;top:353px" width="14" height="23" viewBox="0 0 14 23"><path d="M1 1V17.5L4.8 13.8L7.8 20.5L10.3 19.4L7.4 12.8H12.8z" fill="#fff" stroke="#000" stroke-width="1"/></svg>
</body></html>
